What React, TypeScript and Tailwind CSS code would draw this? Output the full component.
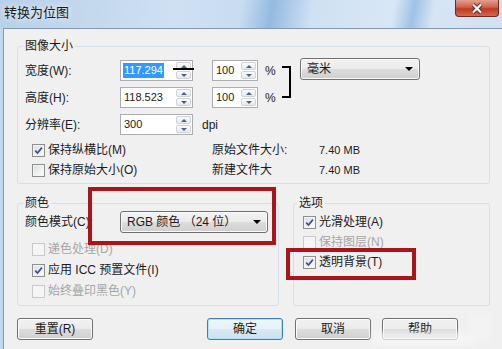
import React from "react";

const RED = "border-[#a8151b]";

function Tri({ up }: { up?: boolean }) {
  return up ? (
    <span className="block h-0 w-0 border-x-[3px] border-b-[3px] border-x-transparent border-b-[#4d6185]" />
  ) : (
    <span className="block h-0 w-0 border-x-[3px] border-t-[3px] border-x-transparent border-t-[#4d6185]" />
  );
}

function Spin({
  value,
  className,
  selected,
  link,
}: {
  value: string;
  className: string;
  selected?: boolean;
  link?: boolean;
}) {
  return (
    <div className={`relative flex h-[21px] border border-[#abadb3] bg-white ${className}`}>
      <div className="flex flex-1 items-center pl-[2px] text-[11px]">
        <span className={selected ? "bg-[#3399ff] px-[1px] leading-[15px] text-white" : "px-[1px] leading-[15px]"}>
          {value}
        </span>
      </div>
      <div className="my-[1px] mr-[1px] flex w-[15px] flex-col gap-[1px]">
        <div className="flex flex-1 items-center justify-center rounded-[2px] border border-[#cfd3d8] bg-gradient-to-b from-[#fbfbfb] to-[#e6e9ed]">
          <Tri up />
        </div>
        <div className="flex flex-1 items-center justify-center rounded-[2px] border border-[#cfd3d8] bg-gradient-to-b from-[#fbfbfb] to-[#e6e9ed]">
          <Tri />
        </div>
      </div>
      {link && <div className="absolute left-[52px] top-[7px] h-[2px] w-[21px] bg-black" />}
    </div>
  );
}

function Combo({ text, className }: { text: string; className: string }) {
  return (
    <div
      className={`flex items-center justify-between rounded-[3px] border border-[#707070] bg-[linear-gradient(#f2f2f2,#ebebeb_50%,#dddddd_50%,#cfcfcf)] pl-[6px] pr-[6px] shadow-[inset_0_0_0_1px_#fbfbfb] ${className}`}
    >
      <span>{text}</span>
      <span className="block h-0 w-0 border-x-[4px] border-t-[4px] border-x-transparent border-t-black" />
    </div>
  );
}

function Check({ checked, disabled, label }: { checked?: boolean; disabled?: boolean; label: string }) {
  return (
    <div className="flex h-[16px] items-center gap-[3px]">
      <span
        className={`flex h-[13px] w-[13px] items-center justify-center border ${
          disabled
            ? "border-[#c9c9c9] bg-[#f5f5f5]"
            : "border-[#8e8f8f] bg-[linear-gradient(135deg,#d9dce0,#ffffff)] shadow-[inset_0_0_0_1px_#f4f4f4]"
        }`}
      >
        {checked && (
          <svg width="9" height="9" viewBox="0 0 9 9">
            <path d="M1.2 4.6 L3.5 7 L7.9 1.6" fill="none" stroke="#3a4f95" strokeWidth="1.7" />
          </svg>
        )}
      </span>
      <span className={disabled ? "text-[#a6a6a6]" : ""}>{label}</span>
    </div>
  );
}

function Btn({ label, def, className = "" }: { label: string; def?: boolean; className?: string }) {
  return (
    <div
      className={`flex h-[22px] w-[76px] items-center justify-center rounded-[3px] border ${
        def
          ? "border-[#3c7fb1] bg-[linear-gradient(#f0f7fb,#e6f1f8_50%,#d8e9f3_50%,#cde3f0)] shadow-[inset_0_0_0_1px_#b4e0f7]"
          : "border-[#707070] bg-[linear-gradient(#f2f2f2,#ebebeb_50%,#dddddd_50%,#cfcfcf)] shadow-[inset_0_0_0_1px_#fcfcfc]"
      } ${className}`}
    >
      {label}
    </div>
  );
}

function Legend({ text }: { text: string }) {
  return <legend className="-ml-[2px] px-[2px] leading-[14px]">{text}</legend>;
}

export default function App() {
  return (
    <div className="relative flex h-[349px] w-[502px] flex-col overflow-hidden bg-[#c4d8ec] text-[12px] leading-[14px] text-[#1b1b1b] [font-family:'Liberation_Sans','Noto_Sans_CJK_SC',sans-serif]">
      {/* title bar */}
      <div className="flex h-[28px] shrink-0 items-start justify-between bg-[linear-gradient(100deg,#b8d0e9_0%,#cfe0f2_35%,#c9dcf0_48%,#94bae0_54%,#cfe1f2_62%,#d8e7f5_78%,#a0c2e4_82%,#d6e5f4_86%,#d0e1f2_100%)]">
        <div className="pl-[4px] pt-[5px] text-[13px] leading-[16px] [text-shadow:0_0_6px_#fff]">转换为位图</div>
        <div className="mr-[3px] flex h-[17px] w-[44px] items-center justify-center rounded-b-[4px] border border-t-0 border-[#6b2a22] bg-[linear-gradient(#e4a08f,#d0604b_45%,#c03a22_55%,#d2694f)]">
          <svg width="12" height="11" viewBox="0 0 12 11">
            <path d="M2 1.5 L10 9.5 M10 1.5 L2 9.5" stroke="#5a2a24" strokeWidth="4" />
            <path d="M2 1.5 L10 9.5 M10 1.5 L2 9.5" stroke="#ffffff" strokeWidth="2.2" />
          </svg>
        </div>
      </div>

      {/* body */}
      <div className="ml-[3px] flex flex-1 flex-col border-l border-t border-[#8497ad] bg-[#f0f0f0] pl-[13px] pr-[12px] pt-[10px]">
        {/* 图像大小 */}
        <fieldset className="rounded-[3px] border border-[#d5dfe5] px-[7px] pb-[5px] pt-[7px]">
          <Legend text="图像大小" />
          <div className="flex">
            <div className="flex flex-col gap-[6px]">
              <div className="flex h-[21px] items-center">
                <span className="w-[95px]">宽度(W):</span>
                <Spin value="117.294" className="w-[73px]" selected link />
                <Spin value="100" className="ml-[19px] w-[46px]" />
                <span className="ml-[7px] w-[12px]">%</span>
              </div>
              <div className="flex h-[21px] items-center">
                <span className="w-[95px]">高度(H):</span>
                <Spin value="118.523" className="w-[73px]" />
                <Spin value="100" className="ml-[19px] w-[46px]" />
                <span className="ml-[7px] w-[12px]">%</span>
              </div>
            </div>
            <svg width="16" height="40" viewBox="0 0 16 40" className="shrink-0">
              <path d="M5 7 H13 V37 H5" fill="none" stroke="#000" strokeWidth="2" />
            </svg>
            <Combo text="毫米" className="-mt-[2px] ml-[7px] h-[22px] w-[120px]" />
          </div>
          <div className="mt-[6px] flex h-[21px] items-center">
            <span className="w-[95px]">分辨率(E):</span>
            <Spin value="300" className="w-[73px]" />
            <span className="ml-[9px]">dpi</span>
          </div>
          <div className="mt-[7px] flex flex-col gap-[4px]">
            <div className="flex items-center">
              <div className="w-[187px] pl-[7px]">
                <Check checked label="保持纵横比(M)" />
              </div>
              <span className="w-[107px]">原始文件大小:</span>
              <span className="text-[11px]">7.40 MB</span>
            </div>
            <div className="flex items-center">
              <div className="w-[187px] pl-[7px]">
                <Check label="保持原始大小(O)" />
              </div>
              <span className="w-[107px]">新建文件大</span>
              <span className="text-[11px]">7.40 MB</span>
            </div>
          </div>
        </fieldset>

        {/* 颜色 / 选项 */}
        <div className="mt-[12px] flex gap-[14px]">
          <fieldset className="w-[262px] rounded-[3px] border border-[#d5dfe5] px-[7px] pb-[6px] pt-[1px]">
            <Legend text="颜色" />
            <div className="flex h-[22px] items-center">
              <span className="w-[95px]">颜色模式(C):</span>
              <Combo text="RGB 颜色 （24 位）" className="h-[22px] w-[148px]" />
            </div>
            <div className="mt-[8px] flex flex-col gap-[5px] pl-[7px]">
              <Check disabled label="递色处理(D)" />
              <Check checked label="应用 ICC 预置文件(I)" />
              <Check disabled label="始终叠印黑色(Y)" />
            </div>
          </fieldset>
          <fieldset className="flex-1 rounded-[3px] border border-[#d5dfe5] pl-[5px] pt-[4px]">
            <Legend text="选项" />
            <div className="flex flex-col gap-[4px] pl-[4px]">
              <Check checked label="光滑处理(A)" />
              <Check disabled label="保持图层(N)" />
              <Check checked label="透明背景(T)" />
            </div>
          </fieldset>
        </div>

        {/* buttons */}
        <div className="mt-[12px] flex">
          <Btn label="重置(R)" />
          <Btn label="确定" def className="ml-[114px]" />
          <Btn label="取消" className="ml-[12px]" />
          <Btn label="帮助" className="ml-[11px]" />
        </div>
      </div>

      {/* watermark haze over the help button's lower edge */}
      <div className="pointer-events-none absolute left-[372px] top-[332px] h-[14px] w-[104px] bg-[#f7f7f7]/70 blur-[2px]" />
      <div className="pointer-events-none absolute left-[470px] top-[312px] h-[30px] w-[20px] bg-[#f5f5f5]/60 blur-[3px]" />

      {/* red annotation boxes */}
      <div className={`pointer-events-none absolute left-[88px] top-[187px] h-[58px] w-[188px] border-[4px] ${RED}`} />
      <div className={`pointer-events-none absolute left-[286px] top-[248px] h-[32px] w-[130px] border-[4px] ${RED}`} />
    </div>
  );
}
